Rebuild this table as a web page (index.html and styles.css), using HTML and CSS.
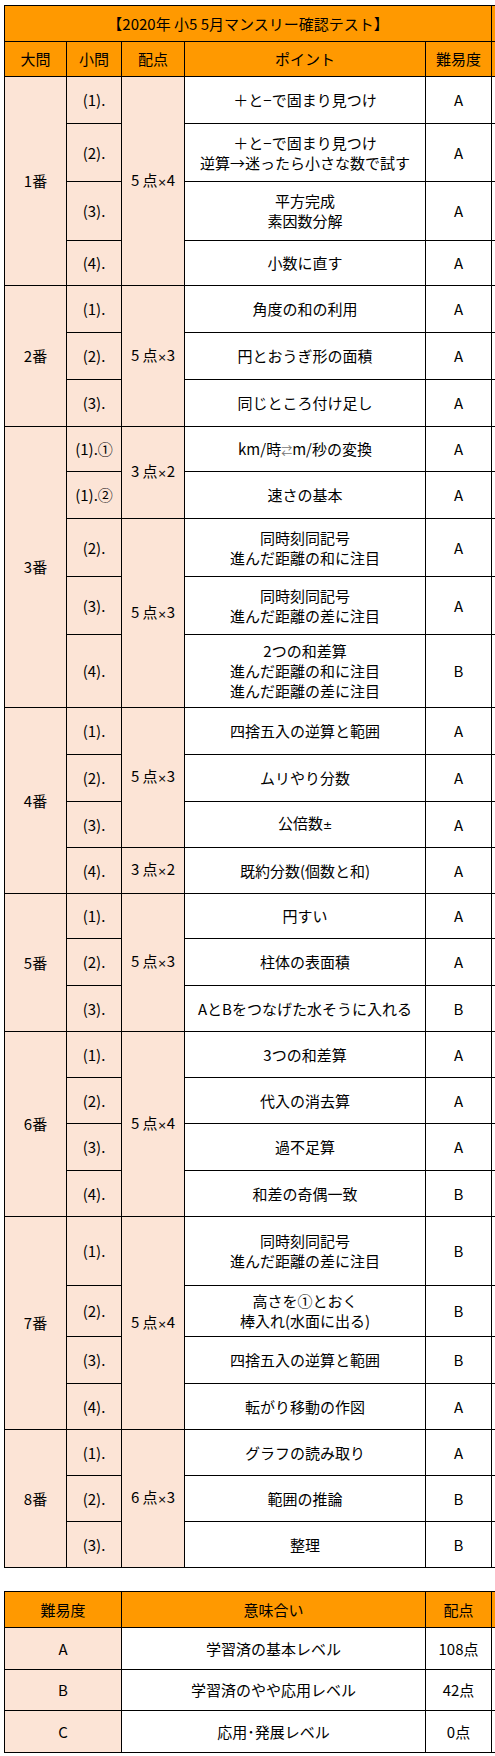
FILE: index.html
```html
<!DOCTYPE html>
<html lang="ja">
<head>
<meta charset="utf-8">
<title>2020年 小5 5月マンスリー確認テスト</title>
<link rel="stylesheet" href="styles.css">
</head>
<body>
<main class="page">
<table class="sheet main-sheet">
  <colgroup>
    <col class="c-dai"><col class="c-sho"><col class="c-ten"><col class="c-point"><col class="c-level"><col class="c-stub">
  </colgroup>
  <tr class="h36">
    <td class="orange" colspan="5">【2020年 小5 5月マンスリー確認テスト】</td><td class="stub orange"></td>
  </tr>
  <tr class="h35">
    <td class="orange">大問</td><td class="orange">小問</td><td class="orange">配点</td><td class="orange">ポイント</td><td class="orange">難易度</td><td class="stub orange"></td>
  </tr>

  <tr class="h47">
    <td class="beige" rowspan="4">1番</td><td class="beige">(1).</td><td class="beige" rowspan="4">5 点<span class="times">×</span>4</td><td>＋と−で固まり見つけ</td><td>A</td><td class="stub"></td>
  </tr>
  <tr class="h58">
    <td class="beige">(2).</td><td>＋と−で固まり見つけ<br>逆算→迷ったら小さな数で試す</td><td>A</td><td class="stub"></td>
  </tr>
  <tr class="h59">
    <td class="beige">(3).</td><td>平方完成<br>素因数分解</td><td>A</td><td class="stub"></td>
  </tr>
  <tr class="h45">
    <td class="beige">(4).</td><td>小数に直す</td><td>A</td><td class="stub"></td>
  </tr>

  <tr class="h47">
    <td class="beige" rowspan="3">2番</td><td class="beige">(1).</td><td class="beige" rowspan="3">5 点<span class="times">×</span>3</td><td>角度の和の利用</td><td>A</td><td class="stub"></td>
  </tr>
  <tr class="h47">
    <td class="beige">(2).</td><td>円とおうぎ形の面積</td><td>A</td><td class="stub"></td>
  </tr>
  <tr class="h47">
    <td class="beige">(3).</td><td>同じところ付け足し</td><td>A</td><td class="stub"></td>
  </tr>

  <tr class="h45">
    <td class="beige" rowspan="5">3番</td><td class="beige">(1).①</td><td class="beige" rowspan="2">3 点<span class="times">×</span>2</td><td>km/時<span class="arrow">⇄</span>m/秒の変換</td><td>A</td><td class="stub"></td>
  </tr>
  <tr class="h47">
    <td class="beige">(1).②</td><td>速さの基本</td><td>A</td><td class="stub"></td>
  </tr>
  <tr class="h58">
    <td class="beige">(2).</td><td class="beige" rowspan="3">5 点<span class="times">×</span>3</td><td>同時刻同記号<br>進んだ距離の和に注目</td><td>A</td><td class="stub"></td>
  </tr>
  <tr class="h58">
    <td class="beige">(3).</td><td>同時刻同記号<br>進んだ距離の差に注目</td><td>A</td><td class="stub"></td>
  </tr>
  <tr class="h73">
    <td class="beige">(4).</td><td>2つの和差算<br>進んだ距離の和に注目<br>進んだ距離の差に注目</td><td>B</td><td class="stub"></td>
  </tr>

  <tr class="h47">
    <td class="beige" rowspan="4">4番</td><td class="beige">(1).</td><td class="beige" rowspan="3">5 点<span class="times">×</span>3</td><td>四捨五入の逆算と範囲</td><td>A</td><td class="stub"></td>
  </tr>
  <tr class="h47">
    <td class="beige">(2).</td><td>ムリやり分数</td><td>A</td><td class="stub"></td>
  </tr>
  <tr class="h46">
    <td class="beige">(3).</td><td>公倍数<span class="times">±</span></td><td>A</td><td class="stub"></td>
  </tr>
  <tr class="h46">
    <td class="beige">(4).</td><td class="beige">3 点<span class="times">×</span>2</td><td>既約分数(個数と和)</td><td>A</td><td class="stub"></td>
  </tr>

  <tr class="h45">
    <td class="beige" rowspan="3">5番</td><td class="beige">(1).</td><td class="beige" rowspan="3">5 点<span class="times">×</span>3</td><td>円すい</td><td>A</td><td class="stub"></td>
  </tr>
  <tr class="h47">
    <td class="beige">(2).</td><td>柱体の表面積</td><td>A</td><td class="stub"></td>
  </tr>
  <tr class="h46">
    <td class="beige">(3).</td><td>AとBをつなげた水そうに入れる</td><td>B</td><td class="stub"></td>
  </tr>

  <tr class="h46">
    <td class="beige" rowspan="4">6番</td><td class="beige">(1).</td><td class="beige" rowspan="4">5 点<span class="times">×</span>4</td><td>3つの和差算</td><td>A</td><td class="stub"></td>
  </tr>
  <tr class="h46">
    <td class="beige">(2).</td><td>代入の消去算</td><td>A</td><td class="stub"></td>
  </tr>
  <tr class="h47">
    <td class="beige">(3).</td><td>過不足算</td><td>A</td><td class="stub"></td>
  </tr>
  <tr class="h46">
    <td class="beige">(4).</td><td>和差の奇偶一致</td><td>B</td><td class="stub"></td>
  </tr>

  <tr class="h69">
    <td class="beige" rowspan="4">7番</td><td class="beige">(1).</td><td class="beige" rowspan="4">5 点<span class="times">×</span>4</td><td>同時刻同記号<br>進んだ距離の差に注目</td><td>B</td><td class="stub"></td>
  </tr>
  <tr class="h51">
    <td class="beige">(2).</td><td>高さを①とおく<br>棒入れ(水面に出る)</td><td>B</td><td class="stub"></td>
  </tr>
  <tr class="h47">
    <td class="beige">(3).</td><td>四捨五入の逆算と範囲</td><td>B</td><td class="stub"></td>
  </tr>
  <tr class="h46">
    <td class="beige">(4).</td><td>転がり移動の作図</td><td>A</td><td class="stub"></td>
  </tr>

  <tr class="h46">
    <td class="beige" rowspan="3">8番</td><td class="beige">(1).</td><td class="beige" rowspan="3">6 点<span class="times">×</span>3</td><td>グラフの読み取り</td><td>A</td><td class="stub"></td>
  </tr>
  <tr class="h46">
    <td class="beige">(2).</td><td>範囲の推論</td><td>B</td><td class="stub"></td>
  </tr>
  <tr class="h46">
    <td class="beige">(3).</td><td>整理</td><td>B</td><td class="stub"></td>
  </tr>
</table>

<table class="sheet legend-sheet">
  <colgroup>
    <col class="l-level"><col class="l-mean"><col class="l-pts"><col class="c-stub">
  </colgroup>
  <tr class="h36">
    <td class="orange">難易度</td><td class="orange">意味合い</td><td class="orange">配点</td><td class="stub orange"></td>
  </tr>
  <tr class="h42">
    <td class="beige">A</td><td>学習済の基本レベル</td><td>108点</td><td class="stub"></td>
  </tr>
  <tr class="h41">
    <td class="beige">B</td><td>学習済のやや応用レベル</td><td>42点</td><td class="stub"></td>
  </tr>
  <tr class="h42">
    <td class="beige">C</td><td>応用･発展レベル</td><td>0点</td><td class="stub"></td>
  </tr>
</table>
</main>
</body>
</html>
```
FILE: styles.css
```css
html, body {
  margin: 0;
  padding: 0;
  background: #ffffff;
}

.page {
  padding: 5px 0 0 4px;
  font-family: "Noto Sans CJK JP", "Noto Sans", sans-serif;
  font-size: 15px;
  color: #000000;
}

.sheet {
  border-collapse: collapse;
  table-layout: fixed;
  width: 491px;
}

.legend-sheet {
  margin-top: 23px;
}

.sheet td {
  border: 1px solid #000000;
  padding: 0;
  text-align: center;
  vertical-align: middle;
  line-height: 20px;
  white-space: nowrap;
  background: #ffffff;
}

.sheet td.orange {
  background: #ff9900;
}

.sheet td.beige {
  background: #fce4d6;
}

.sheet td.stub {
  border-right: none;
}

.arrow {
  font-size: 11px;
  color: #777777;
}

.times {
  font-family: "DejaVu Sans", sans-serif;
  font-size: 11px;
}

.c-dai { width: 62px; }
.c-sho { width: 55px; }
.c-ten { width: 63px; }
.c-point { width: 241px; }
.c-level { width: 66px; }
.c-stub { width: 4px; }

.l-level { width: 117px; }
.l-mean { width: 304px; }
.l-pts { width: 66px; }

.h35 { height: 35px; }
.h36 { height: 36px; }
.h41 { height: 41px; }
.h42 { height: 42px; }
.h45 { height: 45px; }
.h46 { height: 46px; }
.h47 { height: 47px; }
.h51 { height: 51px; }
.h58 { height: 58px; }
.h59 { height: 59px; }
.h69 { height: 69px; }
.h73 { height: 73px; }
```
